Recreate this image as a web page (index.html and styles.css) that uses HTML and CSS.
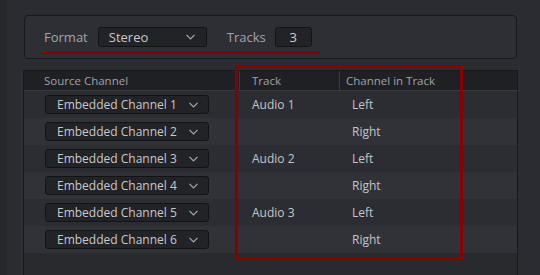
FILE: index.html
```html
<!DOCTYPE html>
<html lang="en">
<head>
  <meta charset="UTF-8" />
  <title>Audio Channel Mapping</title>
  <link rel="stylesheet" href="styles.css">
</head>
<body>
  <div class="app">
    <div class="panel">
      <div class="format-row">
        <span class="label">Format</span>
        <div class="select select-format">
          <span>Stereo</span>
          <svg class="chevron" width="9" height="6" viewBox="0 0 9 6"><path d="M0.5 0.8 L4.5 4.8 L8.5 0.8" /></svg>
        </div>
        <span class="label label-tracks">Tracks</span>
        <div class="field">3</div>
      </div>
    </div>

    <div class="table">
      <div class="row head">
        <div class="cell col-source">Source Channel</div>
        <div class="cell col-track">Track</div>
        <div class="cell col-channel">Channel in Track</div>
      </div>

      <div class="row">
        <div class="cell col-source"><div class="select"><span>Embedded Channel 1</span><svg class="chevron" width="9" height="6" viewBox="0 0 9 6"><path d="M0.5 0.8 L4.5 4.8 L8.5 0.8" /></svg></div></div>
        <div class="cell col-track">Audio 1</div>
        <div class="cell col-channel">Left</div>
      </div>
      <div class="row">
        <div class="cell col-source"><div class="select"><span>Embedded Channel 2</span><svg class="chevron" width="9" height="6" viewBox="0 0 9 6"><path d="M0.5 0.8 L4.5 4.8 L8.5 0.8" /></svg></div></div>
        <div class="cell col-track"></div>
        <div class="cell col-channel">Right</div>
      </div>
      <div class="row">
        <div class="cell col-source"><div class="select"><span>Embedded Channel 3</span><svg class="chevron" width="9" height="6" viewBox="0 0 9 6"><path d="M0.5 0.8 L4.5 4.8 L8.5 0.8" /></svg></div></div>
        <div class="cell col-track">Audio 2</div>
        <div class="cell col-channel">Left</div>
      </div>
      <div class="row">
        <div class="cell col-source"><div class="select"><span>Embedded Channel 4</span><svg class="chevron" width="9" height="6" viewBox="0 0 9 6"><path d="M0.5 0.8 L4.5 4.8 L8.5 0.8" /></svg></div></div>
        <div class="cell col-track"></div>
        <div class="cell col-channel">Right</div>
      </div>
      <div class="row">
        <div class="cell col-source"><div class="select"><span>Embedded Channel 5</span><svg class="chevron" width="9" height="6" viewBox="0 0 9 6"><path d="M0.5 0.8 L4.5 4.8 L8.5 0.8" /></svg></div></div>
        <div class="cell col-track">Audio 3</div>
        <div class="cell col-channel">Left</div>
      </div>
      <div class="row">
        <div class="cell col-source"><div class="select"><span>Embedded Channel 6</span><svg class="chevron" width="9" height="6" viewBox="0 0 9 6"><path d="M0.5 0.8 L4.5 4.8 L8.5 0.8" /></svg></div></div>
        <div class="cell col-track"></div>
        <div class="cell col-channel">Right</div>
      </div>

      <div class="highlight"></div>
    </div>
  </div>
</body>
</html>
```

FILE: styles.css
```css
html, body {
  margin: 0;
  height: 100%;
  overflow: hidden;
}

body {
  background-color: #2b2c31;
  color: #c4c5c8;
  font-family: 'Open Sans', 'Noto Sans', sans-serif;
  font-size: 12px;
}

.app {
  border-left: 7px solid #26272b;
  height: 100%;
  box-sizing: border-box;
  padding-top: 15px;
}

.panel {
  margin-left: 17px;
  width: 493px;
  height: 44px;
  box-sizing: border-box;
  background-color: #2e2f35;
  border: 1px solid #17181b;
  border-radius: 4px;
  padding: 11px 0 0 17px;
}

.format-row {
  display: inline-flex;
  align-items: center;
  padding: 0 8px 4px 2px;
  border-bottom: 3px solid #8c0000;
  font-size: 13px;
}

.label {
  color: #a3a5a9;
}

.label-tracks {
  margin-left: 20px;
}

.select {
  display: flex;
  align-items: center;
  justify-content: space-between;
  box-sizing: border-box;
  width: 164px;
  height: 19px;
  padding: 0 10px 0 11px;
  background-color: #222327;
  border: 1px solid #121315;
  border-radius: 3px;
  color: #c8c9cc;
}

.select-format {
  width: 109px;
  height: 20px;
  margin-left: 10px;
  padding-left: 10px;
  padding-right: 11px;
}

.chevron path {
  fill: none;
  stroke: #a7a8ab;
  stroke-width: 1.2;
}

.field {
  width: 37px;
  height: 20px;
  box-sizing: border-box;
  margin-left: 9px;
  background-color: #222327;
  border: 1px solid #121315;
  border-radius: 3px;
  text-align: center;
  line-height: 18px;
  color: #d0d1d4;
}

.table {
  position: relative;
  margin: 11px 0 0 16px;
  width: 495px;
  height: 205px;
  box-sizing: border-box;
  border: 1px solid #18191c;
  border-bottom: none;
  background-color: #292a2e;
}

.row {
  display: grid;
  grid-template-columns: 215px 100px 1fr;
  height: 27px;
  align-items: center;
  background-color: #2c2d32;
}

.row:nth-child(odd) {
  background-color: #313238;
}

.row.head {
  height: 20px;
  box-sizing: border-box;
  background-color: #1f2023;
  border-bottom: 1px solid #38393e;
  color: #a0a2a6;
  font-size: 11.5px;
  align-items: stretch;
}

.cell {
  display: flex;
  align-items: center;
}

.col-source {
  padding-left: 21px;
}

.col-track {
  padding-left: 13px;
}

.col-channel {
  padding-left: 13px;
}

.head .col-source {
  padding-left: 20px;
}

.head .col-track {
  padding-left: 12px;
  border-left: 1px solid #3a3b40;
}

.head .col-channel {
  padding-left: 6px;
  border-left: 1px solid #3a3b40;
}

.highlight {
  position: absolute;
  left: 211px;
  top: -6px;
  width: 228px;
  height: 195px;
  box-sizing: border-box;
  border: 3px solid #8a0000;
}
```
